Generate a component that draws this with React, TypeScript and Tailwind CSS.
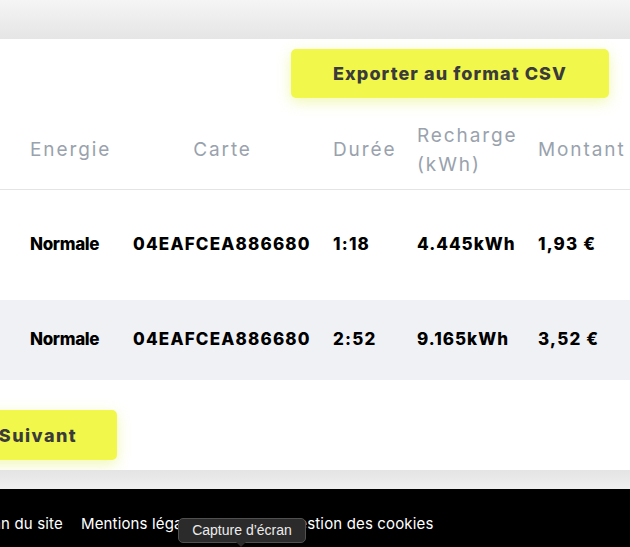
import React from 'react'

const rows = [
  { energie: 'Normale', carte: '04EAFCEA886680', duree: '1:18', recharge: '4.445kWh', montant: '1,93 €' },
  { energie: 'Normale', carte: '04EAFCEA886680', duree: '2:52', recharge: '9.165kWh', montant: '3,52 €' },
]

const cols = 'grid grid-cols-[82px_179px_63px_100px_100px] gap-x-[21px] pl-[30px]'

const App = () => {
  return (
    <div className="relative w-[630px] h-[547px] overflow-hidden bg-white font-['Inter',sans-serif]">
      <div className="h-[39px] bg-gradient-to-b from-[#f5f5f5] to-[#e5e5e5]" />

      <div className="h-[431px] bg-white overflow-hidden">
        <div className="flex justify-end pr-[21px] pt-[10px]">
          <button className="w-[318px] h-[49px] rounded-[5px] bg-[#f1f84b] text-[#3b3b3b] text-[18px] font-extrabold tracking-[0.06em] shadow-[0_4px_14px_rgba(225,240,80,0.45)]">
            Exporter au format CSV
          </button>
        </div>

        <div className={`${cols} mt-[12px] h-[80px] items-center border-b border-[#e4e4e4] text-[#99a2ad] text-[19px] leading-[29px] tracking-[0.1em] text-center whitespace-nowrap`}>
          <div className="text-left">Energie</div>
          <div>Carte</div>
          <div className="text-left">Durée</div>
          <div className="text-left">Recharge<br />(kWh)</div>
          <div className="text-left">Montant</div>
        </div>

        {rows.map((r, i) => (
          <div
            key={i}
            className={`${cols} items-center text-black text-[17px] font-extrabold whitespace-nowrap ${i === 0 ? 'h-[110px] bg-white' : 'h-[80px] bg-[#f0f1f5]'}`}>
            <div className="tracking-[-0.02em]">{r.energie}</div>
            <div className="tracking-[0.07em]">{r.carte}</div>
            <div className="tracking-[0.07em]">{r.duree}</div>
            <div className="tracking-[0.06em]">{r.recharge}</div>
            <div className="tracking-[0.07em]">{r.montant}</div>
          </div>
        ))}

        <div className="pt-[30px]">
          <button className="-ml-[41px] w-[158px] h-[50px] rounded-[5px] bg-[#f1f84b] text-[#3b3b3b] text-[18px] font-extrabold tracking-[0.08em] shadow-[0_4px_14px_rgba(225,240,80,0.45)]">
            Suivant
          </button>
        </div>
      </div>

      <div className="h-[19px] bg-gradient-to-b from-[#e4e4e4] to-[#efefef]" />

      <div className="h-[58px] bg-black flex items-center overflow-hidden">
        <div className="-ml-[21px] flex text-white text-[15px] tracking-[0.01em] whitespace-nowrap pt-[12px]">
          <span className="w-[102px]">Plan du site</span>
          <span className="w-[206px]">Mentions légales</span>
          <span>Gestion des cookies</span>
        </div>
      </div>

      <div className="absolute left-[178px] top-[518px] w-[128px] h-[25px] rounded-[5px] bg-[#2b2b2b] border border-[#505050] flex items-center justify-center text-[#ececec] text-[14px] font-['Liberation_Sans',sans-serif]">
        Capture d’écran
        <div className="absolute left-[57px] -bottom-[5px] w-0 h-0 border-l-[5px] border-r-[5px] border-t-[5px] border-l-transparent border-r-transparent border-t-[#2b2b2b]" />
      </div>
    </div>
  )
}

export default App
